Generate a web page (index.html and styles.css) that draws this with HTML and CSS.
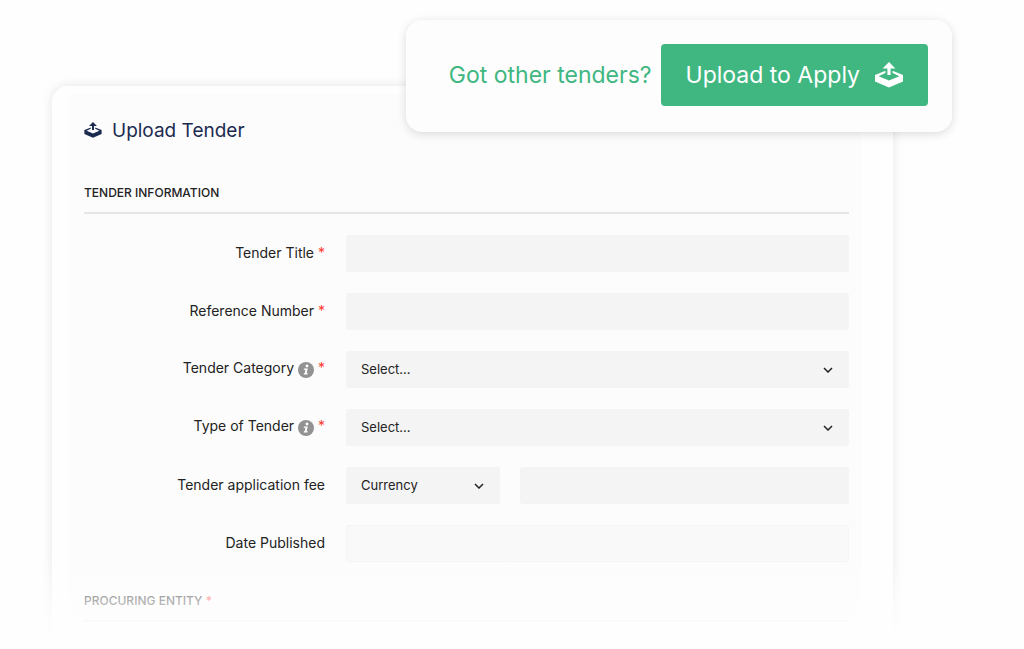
FILE: index.html
```html
<!DOCTYPE html>
<html lang="en">
<head>
    <meta charset="UTF-8">
    <meta name="viewport" content="width=device-width, initial-scale=1.0">
    <title>Upload Tender</title>
    <link rel="stylesheet" href="styles.css">
</head>
<body>
    <svg class="sprite" aria-hidden="true">
        <symbol id="icon-upload" viewBox="0 0 28 26">
            <path d="M14 0L20.4 6.4H15.6V13H12.4V6.4H7.6Z"/>
            <path d="M10.4 8.8V11L3.6 14.2L14 18.6L24.4 14.2L17.6 11V8.8L28 13V19.6L14 25.4L0 19.6V13Z"/>
        </symbol>
        <symbol id="icon-info" viewBox="0 0 16 16">
            <circle cx="8" cy="8" r="8" fill="#929292"/>
            <circle cx="9" cy="4" r="1.4" fill="#fff"/>
            <path d="M6 6.4H9.8L8.6 11.2H9.8L9.5 12.6H5.7L6 11.2H6.7L7.5 7.8H5.7Z" fill="#fff"/>
        </symbol>
    </svg>

    <main class="page">
        <section class="card">
            <form class="panel">
                <h1 class="panel-title">
                    <svg class="title-icon"><use href="#icon-upload"/></svg>
                    Upload Tender
                </h1>

                <h2 class="section-title">Tender Information</h2>

                <div class="form-row">
                    <label for="title">Tender Title <span class="required">*</span></label>
                    <input type="text" id="title" name="title" class="field" required>
                </div>

                <div class="form-row">
                    <label for="reference">Reference Number <span class="required">*</span></label>
                    <input type="text" id="reference" name="reference" class="field" required>
                </div>

                <div class="form-row">
                    <label for="category">Tender Category <svg class="info-icon"><use href="#icon-info"/></svg> <span class="required">*</span></label>
                    <select id="category" name="category" class="field" required>
                        <option value="">Select...</option>
                    </select>
                </div>

                <div class="form-row">
                    <label for="type">Type of Tender <svg class="info-icon"><use href="#icon-info"/></svg> <span class="required">*</span></label>
                    <select id="type" name="type" class="field" required>
                        <option value="">Select...</option>
                    </select>
                </div>

                <div class="form-row">
                    <label for="fee">Tender application fee</label>
                    <div class="fee-group">
                        <select name="currency" class="field" aria-label="Currency">
                            <option value="">Currency</option>
                        </select>
                        <input type="text" id="fee" name="fee" class="field">
                    </div>
                </div>

                <div class="form-row">
                    <label for="published">Date Published</label>
                    <input type="text" id="published" name="published" class="field field-light">
                </div>

                <h2 class="section-title section-next">Procuring Entity <span class="required">*</span></h2>
            </form>
        </section>

        <aside class="upload-box">
            <p class="upload-text">Got other tenders?</p>
            <button type="button" class="btn-upload">
                Upload to Apply
                <svg class="btn-icon"><use href="#icon-upload"/></svg>
            </button>
        </aside>
    </main>
</body>
</html>
```

FILE: styles.css
```css
* {
    margin: 0;
    padding: 0;
    box-sizing: border-box;
}

body {
    font-family: Inter, "Liberation Sans", sans-serif;
    font-size: 13px;
    color: #222;
    background: #fefefe;
}

.sprite {
    display: none;
}

.page {
    position: relative;
    display: flex;
    min-height: 100vh;
    padding: 86px 131px 0 52px;
    overflow: hidden;
}

/* fades the lower part of the form into the page */
.page::after {
    content: "";
    position: absolute;
    left: 0;
    right: 0;
    bottom: 0;
    height: 96px;
    background: linear-gradient(rgba(254, 254, 254, 0), rgba(254, 254, 254, 0.65) 50%, #fefefe 90%);
    pointer-events: none;
}

.card {
    flex: 1;
    padding: 8px 32px 0 16px;
    background: #fefefe;
    border-radius: 16px 16px 0 0;
    box-shadow: 0 0 12px rgba(0, 0, 0, 0.1);
}

.panel {
    padding: 20px 12px 0 16px;
    background: #fcfcfc;
}

.panel-title {
    display: flex;
    align-items: center;
    gap: 10px;
    height: 32px;
    margin-bottom: 37px;
    font-size: 19px;
    font-weight: 400;
    color: #1b2b50;
}

.title-icon {
    width: 18px;
    height: 16px;
    fill: currentColor;
}

.section-title {
    margin-bottom: 21px;
    padding-bottom: 9px;
    border-bottom: 2px solid #e6e6e6;
    font-size: 12px;
    line-height: 20px;
    font-weight: 500;
    text-transform: uppercase;
}

.section-next {
    padding-top: 8px;
    margin-bottom: 0;
}

.form-row {
    display: grid;
    grid-template-columns: 241px 1fr;
    gap: 21px;
    align-items: center;
    margin-bottom: 21px;
}

.form-row label {
    padding-bottom: 2px;
    font-size: 14px;
    text-align: right;
}

.required {
    color: #ff3b30;
}

.info-icon {
    width: 16px;
    height: 16px;
    vertical-align: middle;
}

.field {
    width: 100%;
    height: 37px;
    padding: 0 15px 2px;
    border: none;
    border-radius: 3px;
    background-color: #f4f4f4;
    font: inherit;
    color: inherit;
}

.field-light {
    border: 1px solid #f4f4f4;
    background-color: #f9f9f9;
}

select.field {
    appearance: none;
    background-image: url("data:image/svg+xml,%3Csvg xmlns='http://www.w3.org/2000/svg' width='10' height='6' fill='none' stroke='%23222' stroke-width='1.5'%3E%3Cpath d='M1 1L5 5L9 1'/%3E%3C/svg%3E");
    background-repeat: no-repeat;
    background-position: right 16px center;
}

.fee-group {
    display: grid;
    grid-template-columns: 154px 1fr;
    gap: 20px;
}

.upload-box {
    position: absolute;
    top: 20px;
    right: 72px;
    display: flex;
    align-items: center;
    gap: 9px;
    padding: 24px 24px 26px 43px;
    background: #fdfdfd;
    border-radius: 16px;
    box-shadow: 0 2px 10px rgba(0, 0, 0, 0.14);
}

.upload-text {
    font-size: 23px;
    color: #40b781;
}

.btn-upload {
    display: flex;
    align-items: center;
    gap: 15px;
    height: 62px;
    padding: 0 25px;
    border: none;
    border-radius: 4px;
    background: #40b781;
    color: #fff;
    font: inherit;
    font-size: 23px;
    cursor: pointer;
}

.btn-icon {
    width: 28px;
    height: 26px;
    fill: currentColor;
}
```
